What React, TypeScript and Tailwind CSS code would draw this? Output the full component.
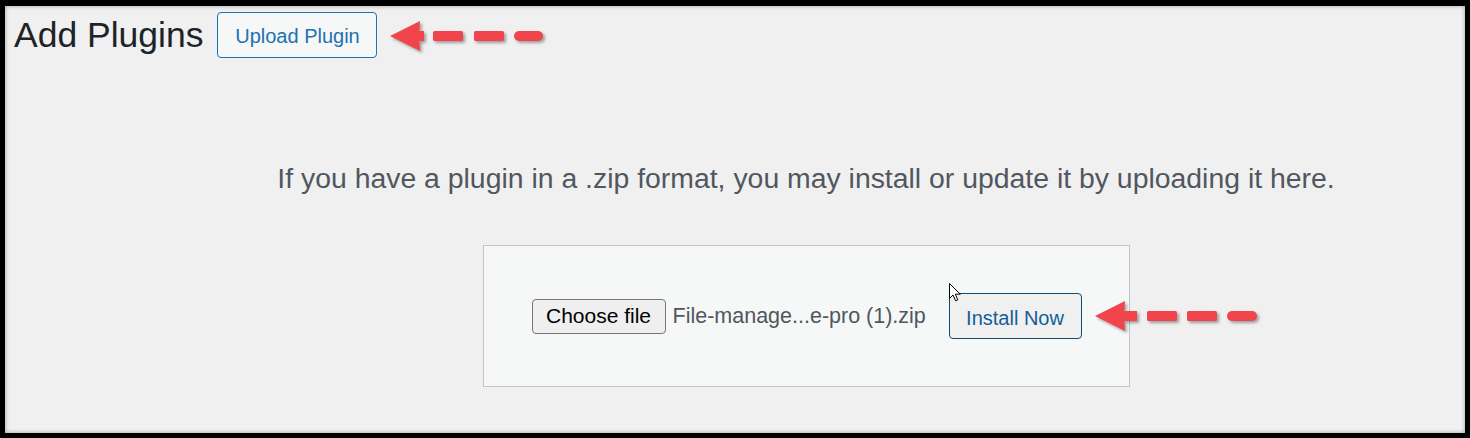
import React from "react";

// Red dashed call-out arrow pointing left (tip at x=0)
function CalloutArrow({ shaftEnd, dashes }: { shaftEnd: number; dashes: [number, number][] }) {
  const width = dashes[dashes.length - 1][1] + 4;
  return (
    <svg
      width={width}
      height={36}
      viewBox={`0 0 ${width} 36`}
      className="shrink-0 drop-shadow-[2px_2px_1.5px_rgba(0,0,0,0.35)]"
    >
      <polygon points="0,17 30,2 29,17 30,32" fill="#f2454b" />
      <rect x={27} y={12} width={shaftEnd - 27} height={10} fill="#f2454b" />
      {dashes.map(([a, b], i) => (
        <rect
          key={i}
          x={a}
          y={12}
          width={b - a}
          height={10}
          rx={i === dashes.length - 1 ? 5 : 1.5}
          fill="#f2454b"
        />
      ))}
    </svg>
  );
}

export default function App() {
  return (
    <div className="w-[1470px] h-[438px] bg-black pt-[6px] pl-[5px] pr-[5px] pb-[5px] font-['Liberation_Sans',Arial,sans-serif]">
      <div className="relative h-full bg-[#f0f0f1] shadow-[inset_0_0_4px_rgba(0,0,0,0.35)]">
        {/* Header */}
        <div className="flex items-center pt-[6px] pl-[9px]">
          <h1 className="text-[35.5px] leading-[40px] font-normal text-[#1d2327]">Add Plugins</h1>
          <button className="shrink-0 ml-[14px] w-[160px] h-[46px] pt-[2px] rounded-[4px] border border-[#2271b1] bg-[#f6f7f7] text-[20px] text-[#2271b1]">
            Upload Plugin
          </button>
          <div className="shrink-0 ml-[13px] mt-[4px]">
            <CalloutArrow shaftEnd={34} dashes={[[43, 73], [84, 114], [124, 153]]} />
          </div>
        </div>

        {/* Upload area */}
        <div className="flex flex-col items-center pl-[142px]">
          <p className="mt-[102px] text-[28.4px] leading-[36px] text-[#50575e] whitespace-nowrap">
            If you have a plugin in a .zip format, you may install or update it by uploading it here.
          </p>
          <div className="mt-[49px] w-[647px] h-[142px] border border-[#c3c4c7] bg-[#f6f7f7] flex items-center pl-[48px] overflow-visible">
            <span className="shrink-0 w-[134px] h-[35px] flex items-center justify-center rounded-[4px] border border-[#767676] bg-[#efefef] text-[21px] text-black whitespace-nowrap">
              Choose file
            </span>
            <span className="shrink-0 ml-[7px] w-[252px] text-[21.5px] text-[#50575e] whitespace-nowrap">
              File-manage...e-pro (1).zip
            </span>
            <button className="shrink-0 ml-[24px] w-[133px] h-[46px] pt-[3px] rounded-[4px] border border-[#0a4b78] bg-[#f0f0f1] text-[20px] text-[#135e96] whitespace-nowrap">
              Install Now
            </button>
            <div className="shrink-0 ml-[13px] mt-[2px]">
              <CalloutArrow shaftEnd={42} dashes={[[52, 82], [92, 122], [132, 162]]} />
            </div>
          </div>
        </div>

        {/* Mouse pointer */}
        <svg width="13" height="20" viewBox="0 0 13 20" className="absolute left-[944px] top-[277px]">
          <path
            d="M0.5 0.5 L0.5 15.5 L4 12 L6.6 17.8 L8.8 16.8 L6.3 11.2 L11.3 11.2 Z"
            fill="#fff"
            stroke="#000"
            strokeWidth="1"
            strokeLinejoin="round"
          />
        </svg>
      </div>
    </div>
  );
}
